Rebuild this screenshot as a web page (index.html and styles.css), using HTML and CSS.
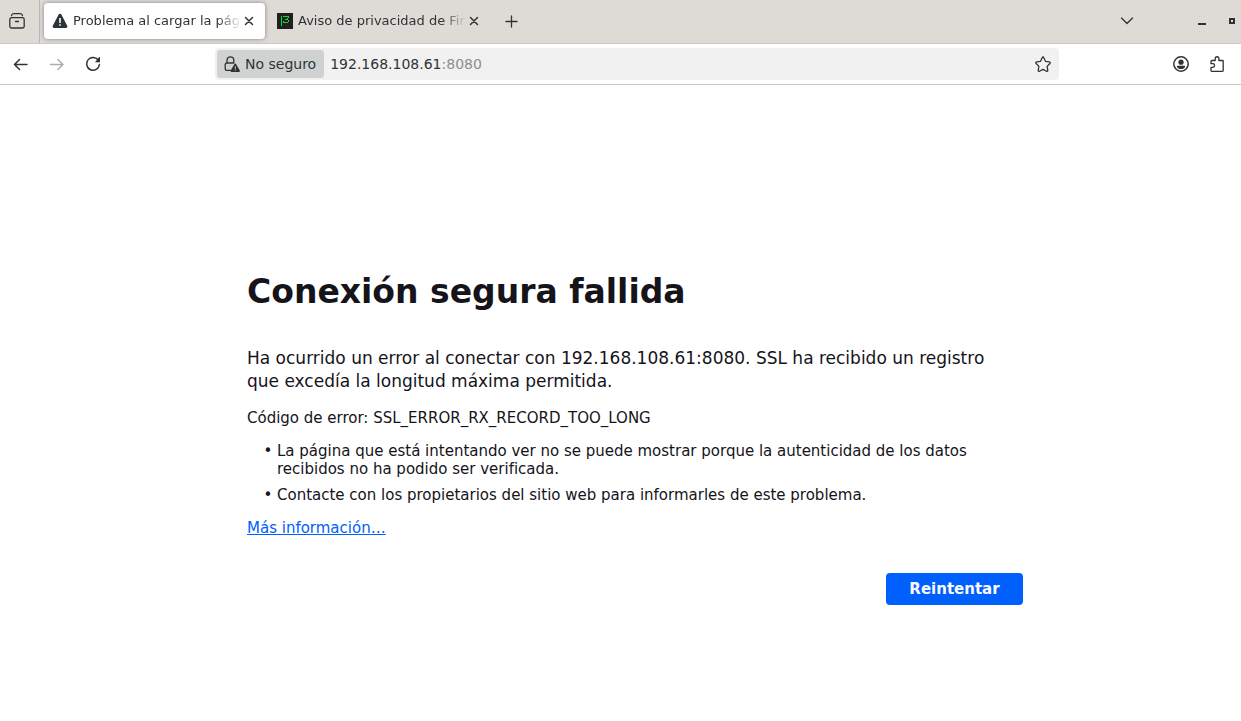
FILE: index.html
```html
<!DOCTYPE html>
<html lang="es">
<head>
<meta charset="utf-8">
<title>Problema al cargar la página</title>
<link rel="stylesheet" href="styles.css">
</head>
<body>
<header class="tabbar">
  <button class="icon-btn overview" aria-label="Vista de pestañas">
    <svg class="icon" viewBox="0 0 16 16"><path class="line" d="M2.500 2.700C2.800 1.300 3.400.7 4.600.7h6.800c1.200 0 1.800.6 2.100 2M2.600 4.700h10.800a1.800 1.800 0 0 1 1.800 1.800v6.700a1.800 1.800 0 0 1-1.800 1.800H2.600a1.800 1.800 0 0 1-1.800-1.800V6.500a1.800 1.800 0 0 1 1.800-1.800zM6.500 8.500h3"/></svg>
  </button>
  <div class="tabs">
    <div class="tab tab-active">
      <svg class="icon" viewBox="0 0 16 16"><path class="solid" fill-rule="evenodd" d="M6.500 1.700a1.700 1.700 0 0 1 3 0l5.700 11c.6 1.100-.1 2.300-1.300 2.300H2.100C.9 15 .2 13.800.8 12.700zM7.200 5v5h1.600V5zM7.200 11.200v1.600h1.600v-1.600z"/></svg>
      <span class="tab-title">Problema al cargar la página</span>
      <button class="close" aria-label="Cerrar pestaña"><svg class="close-icon" viewBox="0 0 10 10"><path class="line thick" d="M1.500 1.500l7 7M8.500 1.500l-7 7"/></svg></button>
    </div>
    <div class="tab">
      <svg class="icon" viewBox="0 0 16 16"><path fill="#231f20" d="M0 0h16v16H0z"/><path fill="#00e030" shape-rendering="crispEdges" d="M4 3h1v10H4zM6 3h6v1H6zM11 4h1v1h-1zM10 5h1v1h-1zM8 6h3v1H8zM11 7h1v2h-1zM6 9h5v1H6zM6 8h1v1H6z"/></svg>
      <span class="tab-title">Aviso de privacidad de Firefox</span>
      <button class="close" aria-label="Cerrar pestaña"><svg class="close-icon" viewBox="0 0 10 10"><path class="line thick" d="M1.500 1.500l7 7M8.500 1.500l-7 7"/></svg></button>
    </div>
  </div>
  <button class="icon-btn new-tab" aria-label="Nueva pestaña"><svg class="icon" viewBox="0 0 16 16"><path class="line" d="M8.500 3v11M3 8.500h11"/></svg></button>
  <div class="window-controls">
    <button class="icon-btn" aria-label="Listar pestañas"><svg class="icon" viewBox="0 0 16 16"><path class="line" d="M2.500 5L8 10.500 13.500 5"/></svg></button>
    <button class="icon-btn minimize" aria-label="Minimizar"><svg class="icon" viewBox="0 0 16 16"><path class="solid" d="M4 10h8v2H4z"/></svg></button>
    <button class="icon-btn maximize" aria-label="Maximizar"><svg class="icon" viewBox="0 0 16 16"><path class="solid" fill-rule="evenodd" d="M5 5h6v6H5zM7 7v2h2V7z"/></svg></button>
  </div>
</header>
<nav class="toolbar" aria-label="Navegación">
  <div class="nav-buttons">
    <button class="icon-btn" aria-label="Atrás"><svg class="icon" viewBox="0 0 16 16"><path class="line thick" d="M14 8.500H1.500M6.500 3.500l-5 5 5 5"/></svg></button>
    <button class="icon-btn" aria-label="Adelante" disabled><svg class="icon" viewBox="0 0 16 16"><path class="line thick" d="M1.500 8.500H14M9 3.500l5 5-5 5"/></svg></button>
    <button class="icon-btn" aria-label="Recargar"><svg class="icon" viewBox="0 0 16 16"><path class="line thick" d="M13.500 4.500A6.400 6.400 0 1 0 14.400 8.500"/><path class="solid" d="M15 1.300v4.900H9.800L11.500 4.500 14.200 1z"/></svg></button>
  </div>
  <div class="urlbar">
    <button class="identity"><svg class="icon" viewBox="0 0 16 16"><path class="line" d="M6.500 14.400H2.800a1.600 1.600 0 0 1-1.600-1.600V8.600A1.600 1.600 0 0 1 2.800 7h6.400M3 7V4.200a3.400 3.400 0 0 1 6.800 0V7"/><path class="solid" fill-rule="evenodd" d="M10.300 8.200c.5-.8 1.400-.8 1.900 0l3.600 6.400c.4.8-.1 1.400-.8 1.400H7.500c-.8 0-1.200-.7-.8-1.400zM10.800 10.300v2.500h1v-2.500zM10.800 13.600v1h1v-1z"/></svg>No seguro</button>
    <a class="address" href="#">192.168.108.61<span class="port">:8080</span></a>
    <button class="icon-btn" aria-label="Añadir a marcadores"><svg class="icon" viewBox="0 0 16 16"><path class="line" d="M8 1c.4 0 .6.300.8.700l1.700 3.600 3.900.6c.8.100 1.100 1 .5 1.600L12.100 10.400l.7 4c.1.8-.6 1.200-1.300.9L8 13.400l-3.500 1.900c-.7.3-1.400-.1-1.300-.9l.7-4L1.100 7.500c-.6-.6-.3-1.500.5-1.600l3.900-.6 1.700-3.600C7.400 1.300 7.600 1 8 1z"/></svg></button>
  </div>
  <div class="tools">
    <button class="icon-btn" aria-label="Cuenta"><svg class="icon" viewBox="0 0 16 16"><circle class="line thick" cx="8" cy="8" r="7.200"/><circle class="solid" cx="8" cy="6.200" r="2.600"/><path class="solid" d="M4.800 9.800h6.400c.6 0 1 .4.9.9C11.600 12.200 10 13 8 13s-3.600-.8-4.100-2.300c-.1-.5.300-.9.900-.9z"/></svg></button>
    <button class="icon-btn" aria-label="Extensiones"><svg class="icon" viewBox="0 0 16 16"><path class="line" d="M2.700 15.300h10.800c.4 0 .7-.3.700-.7V5.200c0-.4-.3-.7-.7-.7H9.900V2.600a1.850 1.850 0 0 0-3.700 0V4.500H2.700c-.4 0-.7.3-.7.700v2.500h1.800a1.800 1.800 0 0 1 0 3.600H2v3.300c0 .4.300.7.700.7z"/></svg></button>
  </div>
</nav>
<main class="page">
  <article class="error">
    <h1 class="title">Conexión segura fallida</h1>
    <p class="summary">Ha ocurrido un error al conectar con 192.168.108.61:8080. SSL ha recibido un registro que excedía la longitud máxima permitida.</p>
    <p class="code">Código de error: SSL_ERROR_RX_RECORD_TOO_LONG</p>
    <ul class="hints">
      <li>La página que está intentando ver no se puede mostrar porque la autenticidad de los datos recibidos no ha podido ser verificada.</li>
      <li>Contacte con los propietarios del sitio web para informarles de este problema.</li>
    </ul>
    <a class="more" href="#">Más información…</a>
    <button class="retry">Reintentar</button>
  </article>
</main>
</body>
</html>
```
FILE: styles.css
```css
* { box-sizing: border-box; }

body {
  margin: 0;
  min-height: 100vh;
  display: flex;
  flex-direction: column;
  background: #fff;
  color: #15141a;
  font: 15px/18px "DejaVu Sans", sans-serif;
}

button {
  padding: 0;
  border: 0;
  background: none;
  color: inherit;
  font: inherit;
}

.icon { display: block; width: 16px; height: 16px; flex: none; }
.line { fill: none; stroke: #2e3436; stroke-width: 1.3; stroke-linecap: round; stroke-linejoin: round; }
.thick { stroke-width: 1.5; }
.solid { fill: #2e3436; }
.icon-btn { display: block; flex: none; }
.icon-btn:disabled { opacity: 0.4; }

.tabbar {
  display: flex;
  align-items: center;
  height: 44px;
  padding-bottom: 1px;
  overflow: hidden;
  background: #dedad6;
  border-bottom: 1px solid #cdc7c2;
  color: #2e3436;
  font-size: 13px;
}
.overview { width: 40px; height: 44px; padding-left: 9px; border-right: 1px solid #bab6b2; }
.tabs { display: flex; gap: 4px; padding-left: 4px; }
.tab {
  display: flex;
  align-items: center;
  gap: 5px;
  width: 221px;
  height: 36px;
  padding: 0 11px 0 8px;
  border-radius: 4px;
}
.tab-active { background: #fff; box-shadow: 0 0 4px rgba(0, 0, 0, 0.4); }
.tab-title {
  flex: 1;
  min-width: 0;
  margin-right: -2px;
  overflow: hidden;
  white-space: nowrap;
  -webkit-mask-image: linear-gradient(to left, transparent, #000 24px);
  mask-image: linear-gradient(to left, transparent, #000 24px);
}
.close-icon { display: block; width: 10px; height: 10px; }
.new-tab { margin-left: 13px; }
.window-controls { display: flex; align-items: center; margin: 0 1px 0 auto; }
.minimize { margin-left: 59px; }
.maximize { margin-left: 14px; }

.toolbar {
  display: flex;
  align-items: center;
  height: 41px;
  border-bottom: 1px solid #cdc7c2;
  color: #2e3436;
}
.nav-buttons { display: flex; gap: 20px; width: 215px; padding-left: 13px; }
.urlbar {
  flex: 1;
  display: flex;
  align-items: center;
  height: 32px;
  padding: 2px 8px 2px 2px;
  border-radius: 4px;
  background: #f1f1f1;
  font-size: 14px;
}
.identity {
  display: flex;
  align-items: center;
  gap: 5px;
  height: 28px;
  padding: 0 8px 0 7px;
  border-radius: 3px;
  background: #d0d2d1;
}
.address { flex: 1; padding-left: 6px; color: inherit; text-decoration: none; }
.port { color: #8b8e8f; }
.tools { display: flex; gap: 20px; width: 182px; padding-right: 16px; justify-content: flex-end; }

.page {
  flex: 1;
  display: flex;
  align-items: center;
  justify-content: center;
  padding: 71px 0 0 29px;
}
.error { display: flex; flex-direction: column; width: 100%; max-width: 776px; }
.title { margin: 0 0 35px; font-size: 33px; line-height: 40px; }
.summary { margin: 0 0 16px; padding-right: 20px; font-size: 17px; line-height: 23px; }
.code { margin: 0 0 15px; }
.hints { margin: 0 0 15px; padding: 0 30px; list-style-type: "• "; }
.hints li + li { margin-top: 8px; }
.more { align-self: flex-start; color: #0060fe; }
.retry {
  align-self: flex-end;
  width: 137px;
  height: 32px;
  margin-top: 36px;
  border-radius: 4px;
  background: #0060fe;
  color: #fbfbfe;
  font-weight: bold;
}
```
